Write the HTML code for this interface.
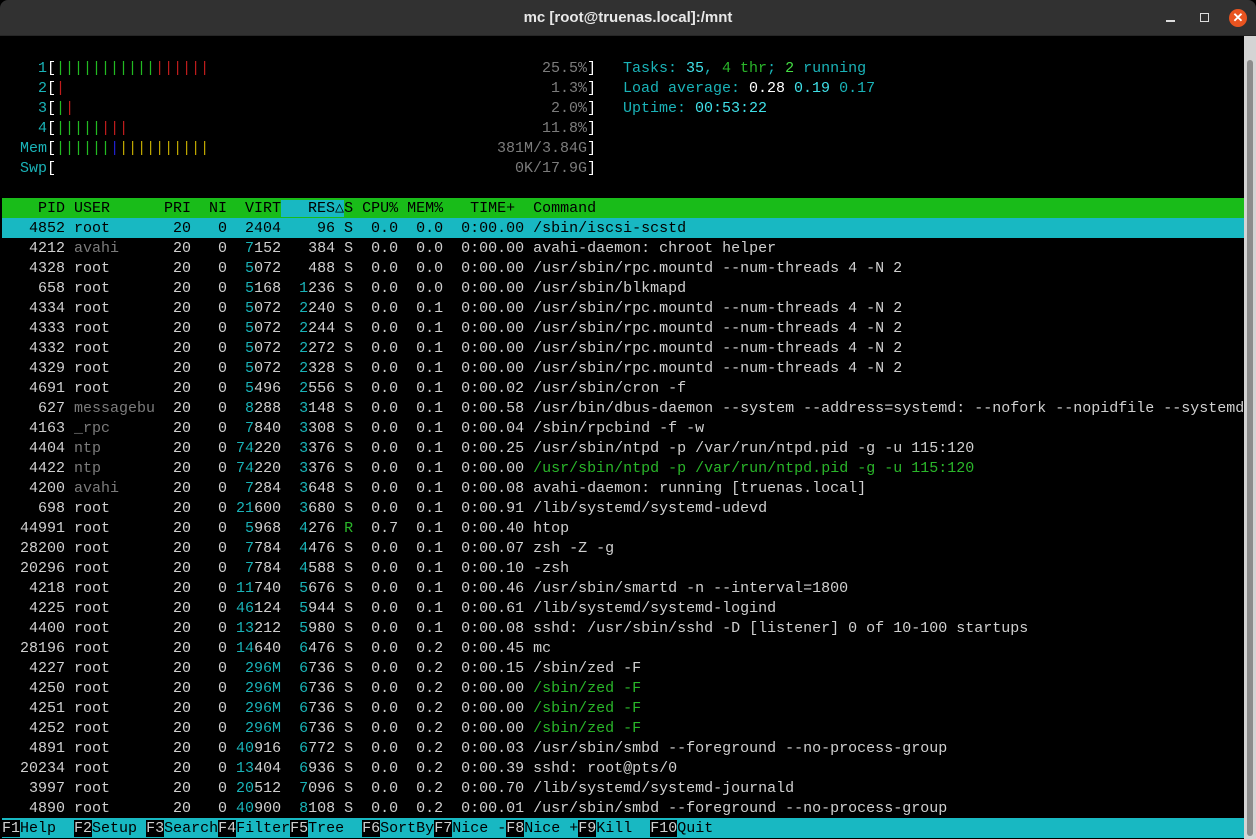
<!DOCTYPE html>
<html><head><meta charset="utf-8"><style>
*{margin:0;padding:0;box-sizing:border-box}
html,body{width:1256px;height:839px;overflow:hidden;background:#000}
#title{position:absolute;left:0;top:0;width:1256px;height:36px;background:#313131;border-radius:8px 8px 0 0;border-bottom:1px solid #262626}
#title .t{position:absolute;left:0;right:0;top:9px;text-align:center;color:#e8e8e8;font:bold 15px "Liberation Sans",sans-serif}
#min{position:absolute;left:1166px;top:20px;width:9px;height:2px;background:#ddd}
#max{position:absolute;left:1200px;top:13px;width:9px;height:9px;border:1.5px solid #ddd}
#cls{position:absolute;left:1229px;top:9px;width:18px;height:18px;border-radius:50%;background:#e95420;color:#fff;font:bold 13px "Liberation Sans",sans-serif;text-align:center;line-height:18px}
#sb{position:absolute;left:1244px;top:36px;width:12px;height:803px;background:#d4d4d4}
#th{position:absolute;left:3px;top:24px;width:6px;height:776px;background:#8c8c8c;border-radius:3px}
#term{position:absolute;left:2px;top:38px;width:1242px;height:801px;overflow:hidden;font:15px/20px "Liberation Mono",monospace;color:#d0d0d0}
#term div{height:20px;line-height:21px;white-space:pre;position:relative;overflow:hidden}
.pct{position:absolute;right:648px;top:0}
.rt{position:absolute;left:621px;top:0}
.c{color:#1ab3b8}.C{color:#40e0e8}.g{color:#7c7c7c}.G{color:#2ab62a}.GG{color:#44dd44}.W{color:#fff}.r{color:#c01c1c}.b{color:#2020d0}.y{color:#c0a800}.R{color:#22bb22}
.hdr{background:#19bc19;color:#000;width:1242px}
.hs{background:#18b8c2}
.sel{background:#18b8c2;color:#000;width:1242px}
.fk{color:#d0d0d0;background:#000}.fl{background:#18b8c2;color:#000}
.bot{background:#18b8c2;width:1242px}
</style></head><body>
<div id="title"><div class="t">mc [root@truenas.local]:/mnt</div><div id="min"></div><div id="max"></div><div id="cls">✕</div></div>
<div id="sb"><div id="th"></div></div>
<div id="term"><div> </div><div>    <span class="c">1</span><span class="W">[</span><span class="R">|||||||||||</span><span class="r">||||||</span><span class="pct"><span class="g">25.5%</span><span class="W">]</span></span><span class="rt"><span class="c">Tasks: </span><span class="C">35</span><span class="c">, </span><span class="G">4 thr</span><span class="c">; </span><span class="GG">2</span><span class="c"> running</span></span></div><div>    <span class="c">2</span><span class="W">[</span><span class="r">|</span><span class="pct"><span class="g">1.3%</span><span class="W">]</span></span><span class="rt"><span class="c">Load average: </span><span class="W">0.28 </span><span class="C">0.19 </span><span class="c">0.17</span></span></div><div>    <span class="c">3</span><span class="W">[</span><span class="R">|</span><span class="r">|</span><span class="pct"><span class="g">2.0%</span><span class="W">]</span></span><span class="rt"><span class="c">Uptime: </span><span class="C">00:53:22</span></span></div><div>    <span class="c">4</span><span class="W">[</span><span class="R">|||||</span><span class="r">|||</span><span class="pct"><span class="g">11.8%</span><span class="W">]</span></span></div><div>  <span class="c">Mem</span><span class="W">[</span><span class="R">||||||</span><span class="b">|</span><span class="y">||||||||||</span><span class="pct"><span class="g">381M/3.84G</span><span class="W">]</span></span></div><div>  <span class="c">Swp</span><span class="W">[</span><span class="pct"><span class="g">0K/17.9G</span><span class="W">]</span></span></div><div> </div><div class="hdr">    PID USER      PRI  NI  VIRT<span class="hs">   RES△</span>S CPU% MEM%   TIME+  Command</div><div class="sel">   4852 root       20   0  2404    96 S  0.0  0.0  0:00.00 /sbin/iscsi-scstd</div><div>   4212 <span class="g">avahi    </span>  20   0  <span class="c">7</span>152   384 S  0.0  0.0  0:00.00 avahi-daemon: chroot helper</div><div>   4328 root       20   0  <span class="c">5</span>072   488 S  0.0  0.0  0:00.00 /usr/sbin/rpc.mountd --num-threads 4 -N 2</div><div>    658 root       20   0  <span class="c">5</span>168  <span class="c">1</span>236 S  0.0  0.0  0:00.00 /usr/sbin/blkmapd</div><div>   4334 root       20   0  <span class="c">5</span>072  <span class="c">2</span>240 S  0.0  0.1  0:00.00 /usr/sbin/rpc.mountd --num-threads 4 -N 2</div><div>   4333 root       20   0  <span class="c">5</span>072  <span class="c">2</span>244 S  0.0  0.1  0:00.00 /usr/sbin/rpc.mountd --num-threads 4 -N 2</div><div>   4332 root       20   0  <span class="c">5</span>072  <span class="c">2</span>272 S  0.0  0.1  0:00.00 /usr/sbin/rpc.mountd --num-threads 4 -N 2</div><div>   4329 root       20   0  <span class="c">5</span>072  <span class="c">2</span>328 S  0.0  0.1  0:00.00 /usr/sbin/rpc.mountd --num-threads 4 -N 2</div><div>   4691 root       20   0  <span class="c">5</span>496  <span class="c">2</span>556 S  0.0  0.1  0:00.02 /usr/sbin/cron -f</div><div>    627 <span class="g">messagebu</span>  20   0  <span class="c">8</span>288  <span class="c">3</span>148 S  0.0  0.1  0:00.58 /usr/bin/dbus-daemon --system --address=systemd: --nofork --nopidfile --systemd-activation</div><div>   4163 <span class="g">_rpc     </span>  20   0  <span class="c">7</span>840  <span class="c">3</span>308 S  0.0  0.1  0:00.04 /sbin/rpcbind -f -w</div><div>   4404 <span class="g">ntp      </span>  20   0 <span class="c">74</span>220  <span class="c">3</span>376 S  0.0  0.1  0:00.25 /usr/sbin/ntpd -p /var/run/ntpd.pid -g -u 115:120</div><div>   4422 <span class="g">ntp      </span>  20   0 <span class="c">74</span>220  <span class="c">3</span>376 S  0.0  0.1  0:00.00 <span class="G">/usr/sbin/ntpd -p /var/run/ntpd.pid -g -u 115:120</span></div><div>   4200 <span class="g">avahi    </span>  20   0  <span class="c">7</span>284  <span class="c">3</span>648 S  0.0  0.1  0:00.08 avahi-daemon: running [truenas.local]</div><div>    698 root       20   0 <span class="c">21</span>600  <span class="c">3</span>680 S  0.0  0.1  0:00.91 /lib/systemd/systemd-udevd</div><div>  44991 root       20   0  <span class="c">5</span>968  <span class="c">4</span>276 <span class="G">R</span>  0.7  0.1  0:00.40 htop</div><div>  28200 root       20   0  <span class="c">7</span>784  <span class="c">4</span>476 S  0.0  0.1  0:00.07 zsh -Z -g</div><div>  20296 root       20   0  <span class="c">7</span>784  <span class="c">4</span>588 S  0.0  0.1  0:00.10 -zsh</div><div>   4218 root       20   0 <span class="c">11</span>740  <span class="c">5</span>676 S  0.0  0.1  0:00.46 /usr/sbin/smartd -n --interval=1800</div><div>   4225 root       20   0 <span class="c">46</span>124  <span class="c">5</span>944 S  0.0  0.1  0:00.61 /lib/systemd/systemd-logind</div><div>   4400 root       20   0 <span class="c">13</span>212  <span class="c">5</span>980 S  0.0  0.1  0:00.08 sshd: /usr/sbin/sshd -D [listener] 0 of 10-100 startups</div><div>  28196 root       20   0 <span class="c">14</span>640  <span class="c">6</span>476 S  0.0  0.2  0:00.45 mc</div><div>   4227 root       20   0  <span class="c">296M</span>  <span class="c">6</span>736 S  0.0  0.2  0:00.15 /sbin/zed -F</div><div>   4250 root       20   0  <span class="c">296M</span>  <span class="c">6</span>736 S  0.0  0.2  0:00.00 <span class="G">/sbin/zed -F</span></div><div>   4251 root       20   0  <span class="c">296M</span>  <span class="c">6</span>736 S  0.0  0.2  0:00.00 <span class="G">/sbin/zed -F</span></div><div>   4252 root       20   0  <span class="c">296M</span>  <span class="c">6</span>736 S  0.0  0.2  0:00.00 <span class="G">/sbin/zed -F</span></div><div>   4891 root       20   0 <span class="c">40</span>916  <span class="c">6</span>772 S  0.0  0.2  0:00.03 /usr/sbin/smbd --foreground --no-process-group</div><div>  20234 root       20   0 <span class="c">13</span>404  <span class="c">6</span>936 S  0.0  0.2  0:00.39 sshd: root@pts/0</div><div>   3997 root       20   0 <span class="c">20</span>512  <span class="c">7</span>096 S  0.0  0.2  0:00.70 /lib/systemd/systemd-journald</div><div>   4890 root       20   0 <span class="c">40</span>900  <span class="c">8</span>108 S  0.0  0.2  0:00.01 /usr/sbin/smbd --foreground --no-process-group</div><div class="bot"><span class="fk">F1</span><span class="fl">Help  </span><span class="fk">F2</span><span class="fl">Setup </span><span class="fk">F3</span><span class="fl">Search</span><span class="fk">F4</span><span class="fl">Filter</span><span class="fk">F5</span><span class="fl">Tree  </span><span class="fk">F6</span><span class="fl">SortBy</span><span class="fk">F7</span><span class="fl">Nice -</span><span class="fk">F8</span><span class="fl">Nice +</span><span class="fk">F9</span><span class="fl">Kill  </span><span class="fk">F10</span><span class="fl">Quit  </span></div></div>
</body></html>
